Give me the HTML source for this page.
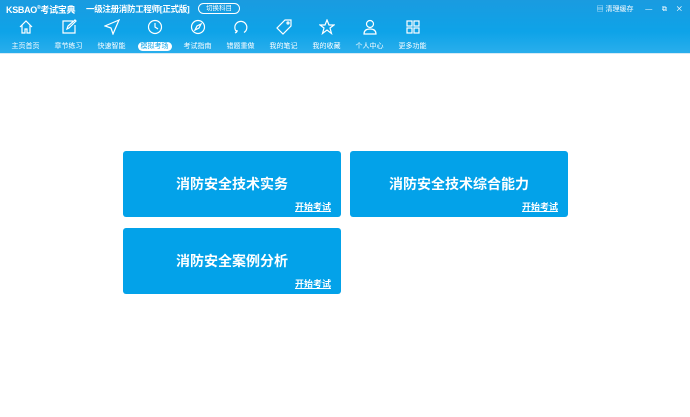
<!DOCTYPE html>
<html><head><meta charset="utf-8"><style>
*{margin:0;padding:0;box-sizing:border-box}
body{width:690px;height:417px;background:#fff;font-family:"Liberation Sans","Noto Sans CJK SC",sans-serif;position:relative;overflow:hidden}
.hd{position:absolute;left:0;top:0;width:690px;height:54px;background:linear-gradient(#1a9be0,#0ea3e8 60%,#29aeec);border-bottom:1px solid #d6eaf5}
.logo{position:absolute;left:6px;top:3px;color:#fff;font-weight:bold;font-size:9px;white-space:nowrap;letter-spacing:-0.3px}
.title{position:absolute;left:86px;top:3px;color:#fff;font-weight:bold;font-size:8.5px;white-space:nowrap;letter-spacing:-0.3px}
.sw{position:absolute;left:198px;top:3px;width:42px;height:11px;border:1px solid #fff;border-radius:6px;color:#fff;font-size:6.5px;text-align:center;line-height:9px}
.tr{position:absolute;right:8px;top:4px;color:#fff;font-size:7px;white-space:nowrap}
.nav{position:absolute;top:19px;width:43px;text-align:center}
.nav svg{display:block;margin:0 auto;width:16px;height:16px}
.nav span{display:inline-block;margin-top:5px;font-size:7px;color:#fff;line-height:9px;padding:0 3px;white-space:nowrap}
.nav.on span{background:#fff;color:#0ea3e8;border-radius:5px}
.card{position:absolute;width:218px;height:66px;background:#03a2e9;border-radius:3px;color:#fff}
.card b{position:absolute;left:0;right:0;top:23px;text-align:center;font-size:14px}
.card u{position:absolute;right:10px;top:49px;font-size:9px;font-weight:bold}
</style></head><body>
<div class="hd">
<div class="logo">KSBAO<sup style="font-size:5px">®</sup>考试宝典</div>
<div class="title">一级注册消防工程师[正式版]</div>
<div class="sw">切换科目</div>
<div class="tr">▤ 清理缓存 &nbsp;&nbsp;&nbsp;&nbsp; — &nbsp;&nbsp;&nbsp; ⧉ &nbsp;&nbsp;&nbsp; ✕</div>
<div class="nav" style="left:4px"><svg viewBox="0 0 16 16" fill="none" stroke="#fff" stroke-width="1.2"><path d="M2 8L8 2l6 6M4 6v8h3v-4h2v4h3V6"/></svg><span>主页首页</span></div>
<div class="nav" style="left:47px"><svg viewBox="0 0 16 16" fill="none" stroke="#fff" stroke-width="1.2"><path d="M12 2H2v12h12V6M6 10l1-3 7-6 1 1-7 7z"/></svg><span>章节练习</span></div>
<div class="nav" style="left:90px"><svg viewBox="0 0 16 16" fill="none" stroke="#fff" stroke-width="1.2"><path d="M15 1L1 7l6 2 2 6z"/></svg><span>快速智能</span></div>
<div class="nav on" style="left:133px"><svg viewBox="0 0 16 16" fill="none" stroke="#fff" stroke-width="1.2"><circle cx="8" cy="8" r="6.5"/><path d="M8 4v4l3 2"/></svg><span>模拟考场</span></div>
<div class="nav" style="left:176px"><svg viewBox="0 0 16 16" fill="none" stroke="#fff" stroke-width="1.2"><circle cx="8" cy="8" r="6.5"/><path d="M11 5L7 7 5 11l4-2z"/></svg><span>考试指南</span></div>
<div class="nav" style="left:219px"><svg viewBox="0 0 16 16" fill="none" stroke="#fff" stroke-width="1.2"><path d="M4 13A6 6 0 1 1 11 13.5M4 13l-2 1M4 13l0-2"/></svg><span>错题重做</span></div>
<div class="nav" style="left:262px"><svg viewBox="0 0 16 16" fill="none" stroke="#fff" stroke-width="1.2"><path d="M9 1h6v6l-8 8-6-6z"/><circle cx="12" cy="4" r="1"/></svg><span>我的笔记</span></div>
<div class="nav" style="left:305px"><svg viewBox="0 0 16 16" fill="none" stroke="#fff" stroke-width="1.2"><path d="M8 1l2 5h5l-4 3 1.5 5.5L8 11l-4.5 3.5L5 9 1 6h5z"/></svg><span>我的收藏</span></div>
<div class="nav" style="left:348px"><svg viewBox="0 0 16 16" fill="none" stroke="#fff" stroke-width="1.2"><circle cx="8" cy="5" r="3.5"/><path d="M2 15c0-4 3-5 6-5s6 1 6 5z"/></svg><span>个人中心</span></div>
<div class="nav" style="left:391px"><svg viewBox="0 0 16 16" fill="none" stroke="#fff" stroke-width="1.2"><rect x="2" y="2" width="5" height="5"/><rect x="9" y="2" width="5" height="5"/><rect x="2" y="9" width="5" height="5"/><rect x="9" y="9" width="5" height="5"/></svg><span>更多功能</span></div>
</div>
<div class="card" style="left:123px;top:151px"><b>消防安全技术实务</b><u>开始考试</u></div>
<div class="card" style="left:350px;top:151px"><b>消防安全技术综合能力</b><u>开始考试</u></div>
<div class="card" style="left:123px;top:228px"><b>消防安全案例分析</b><u>开始考试</u></div>
</body></html>
